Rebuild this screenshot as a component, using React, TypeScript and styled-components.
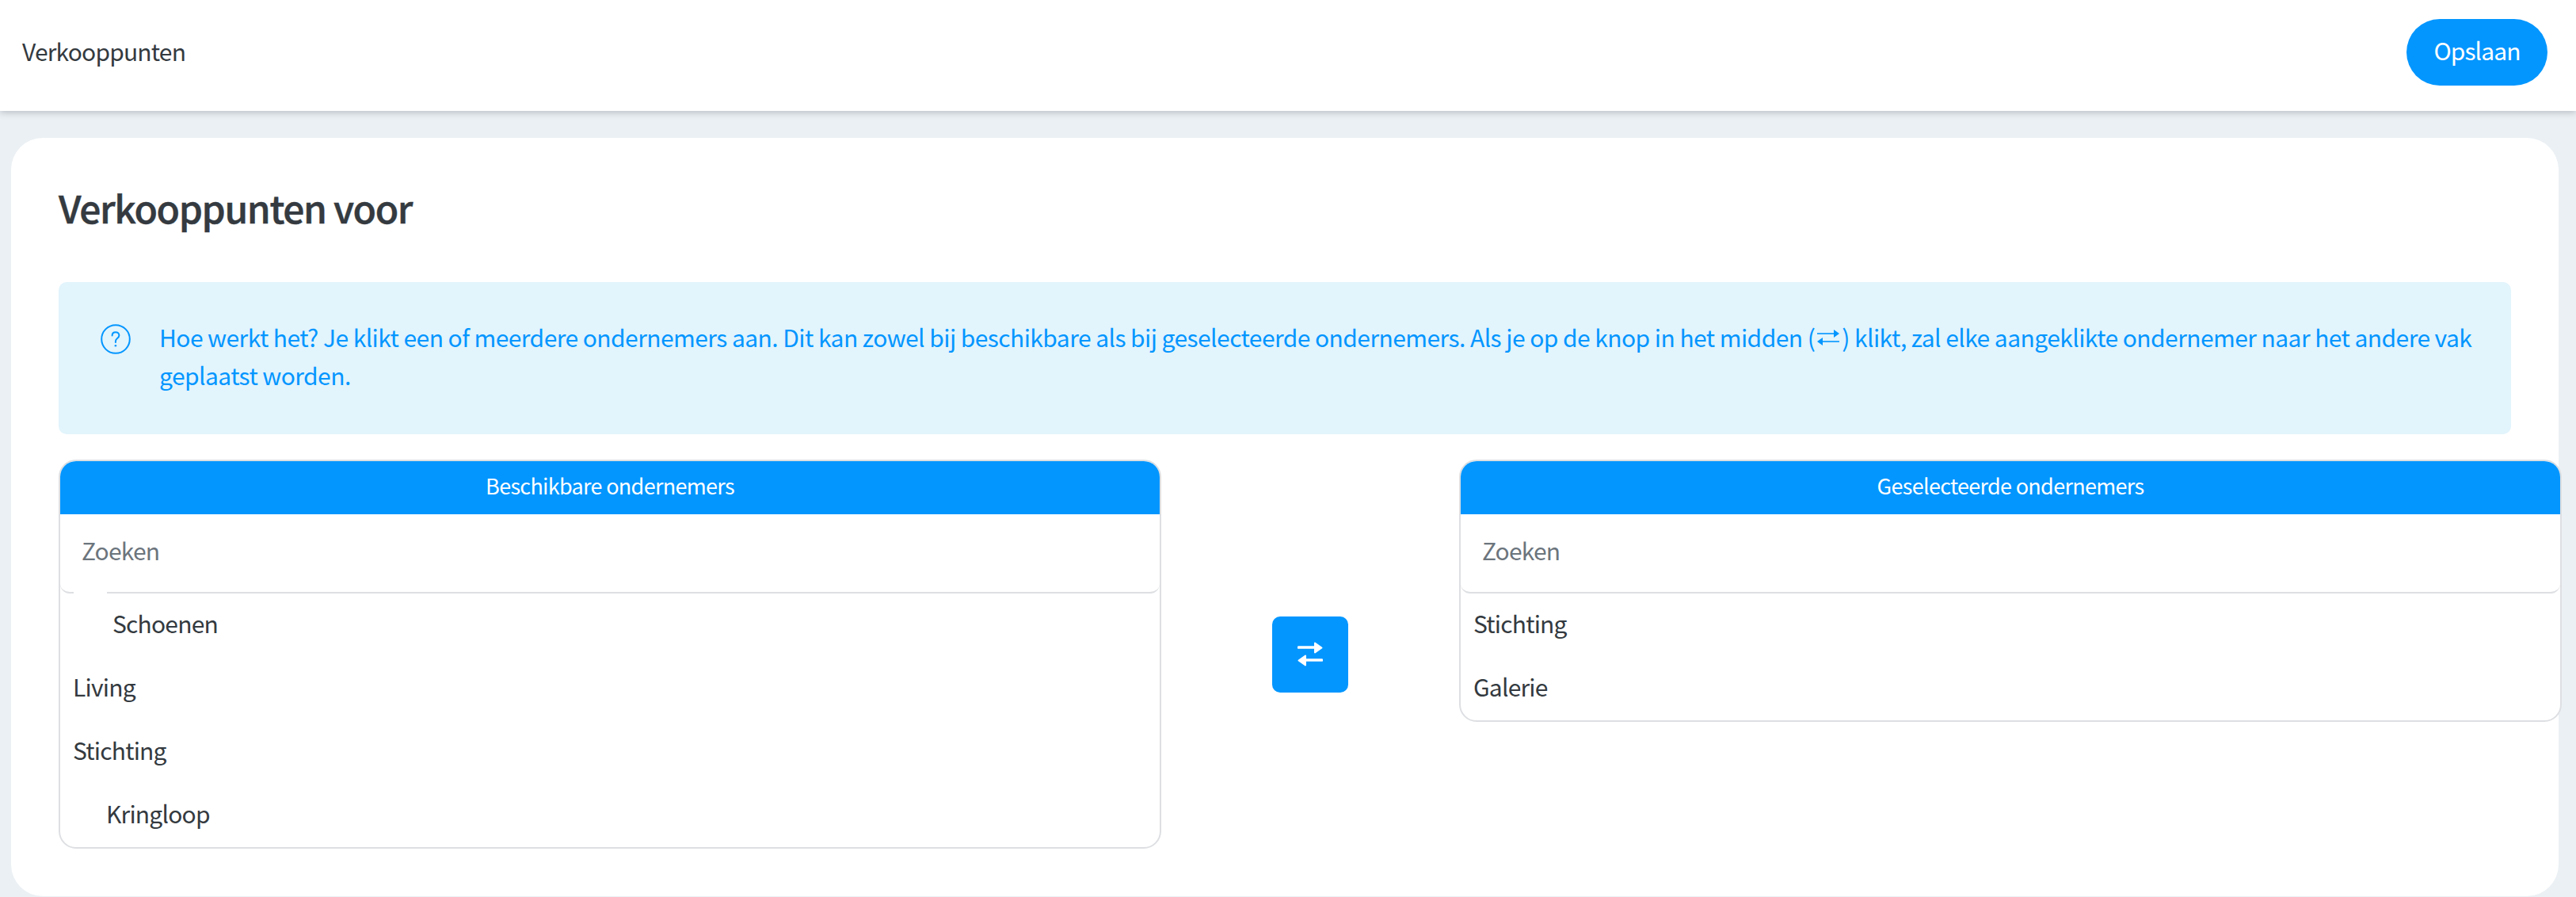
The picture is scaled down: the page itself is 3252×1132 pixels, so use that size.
import styled, { createGlobalStyle } from "styled-components";

const blue = "#0396ff";
const fontStack = '"Noto Sans CJK SC", "Open Sans", "Liberation Sans", sans-serif';

const GlobalStyle = createGlobalStyle`
  html, body {
    margin: 0;
    padding: 0;
    background: #ebf0f4;
    overflow: hidden;
  }
  * {
    box-sizing: border-box;
  }
`;

const Page = styled.div`
  width: 3252px;
  height: 1132px;
  font-family: ${fontStack};
  color: #343a40;
  overflow: hidden;
`;

const TopBar = styled.header`
  position: relative;
  display: flex;
  align-items: center;
  justify-content: space-between;
  height: 140px;
  padding: 0 36px 8px 28px;
  background: #fff;
  box-shadow: 0 2px 8px rgba(60, 70, 80, 0.3);
`;

const TopTitle = styled.div`
  margin-bottom: 5px;
  font-size: 30px;
  line-height: 44px;
  letter-spacing: -0.82px;
`;

const SaveButton = styled.button`
  width: 178px;
  height: 84px;
  padding: 0 0 6px;
  border: 0;
  border-radius: 42px;
  background: ${blue};
  color: #fff;
  font-family: inherit;
  font-size: 30px;
  letter-spacing: -0.9px;
`;

const Card = styled.main`
  height: 957px;
  margin: 34px 22px 0 14px;
  padding: 60px 60px 0;
  background: #fff;
  border-radius: 40px;
`;

const Heading = styled.h1`
  margin: 0 0 68px;
  font-size: 48px;
  line-height: 54px;
  font-weight: 500;
  letter-spacing: -1.37px;
  -webkit-text-stroke: 0.5px #343a40;
  color: #343a40;
`;

const Notice = styled.div`
  display: flex;
  align-items: flex-start;
  height: 192px;
  margin-bottom: 32px;
  padding: 45px 40px 0 53px;
  background: #e2f4fc;
  border-radius: 10px;
  color: ${blue};
  font-size: 30px;
  line-height: 48px;
  letter-spacing: -0.56px;
`;

const NoticeIcon = styled.svg`
  flex: none;
  width: 38px;
  height: 38px;
  margin: 8px 36px 0 0;
`;

const SwapInline = styled.svg`
  display: inline-block;
  width: 28px;
  height: 20px;
  margin: 0 3px;
  vertical-align: 2px;
`;

const Columns = styled.section`
  display: grid;
  grid-template-columns: 1392px 376px 1392px;
  align-items: start;
`;

const Panel = styled.div`
  position: relative;
  border: 2px solid #dddfe2;
  border-radius: 22px;
  overflow: hidden;
  background: #fff;
`;

const PanelHeader = styled.div`
  height: 67px;
  background: ${blue};
  color: #fff;
  font-size: 27px;
  line-height: 62px;
  letter-spacing: -0.7px;
  text-align: center;
`;

const SearchInput = styled.input`
  display: block;
  width: 100%;
  height: 100px;
  padding: 0 27px 8px;
  border: 0;
  border-bottom: 2px solid #dddfe2;
  border-radius: 0 0 12px 12px;
  outline: 0;
  font-family: inherit;
  font-size: 30px;
  letter-spacing: -0.8px;
  color: #343a40;

  &::placeholder {
    color: #6c757d;
    opacity: 1;
  }
`;

const Row = styled.div<{ $indent?: number }>`
  height: 80px;
  padding-left: ${(p) => 16 + (p.$indent ?? 0)}px;
  font-size: 30px;
  line-height: 74px;
  letter-spacing: -0.8px;
`;

const Patch = styled.span`
  position: absolute;
  top: 163px;
  left: 17px;
  width: 42px;
  height: 4px;
  background: #fff;
`;

const SwapCell = styled.div`
  display: flex;
  justify-content: center;
  padding-top: 198px;
`;

const SwapButton = styled.button`
  display: flex;
  align-items: center;
  justify-content: center;
  width: 96px;
  height: 96px;
  padding: 0;
  border: 0;
  border-radius: 10px;
  background: ${blue};
`;

const SwapIcon = styled.svg`
  width: 32px;
  height: 32px;
`;

function ListPanel({
  title,
  rows,
  patched,
}: {
  title: string;
  rows: { name: string; indent?: number }[];
  patched?: boolean;
}) {
  return (
    <Panel>
      <PanelHeader>{title}</PanelHeader>
      <SearchInput placeholder="Zoeken" readOnly />
      {patched && <Patch />}
      {rows.map((row) => (
        <Row key={row.name} $indent={row.indent}>
          {row.name}
        </Row>
      ))}
    </Panel>
  );
}

export default function App() {
  return (
    <Page>
      <GlobalStyle />
      <TopBar>
        <TopTitle>Verkooppunten</TopTitle>
        <SaveButton>Opslaan</SaveButton>
      </TopBar>
      <Card>
        <Heading>Verkooppunten voor</Heading>
        <Notice>
          <NoticeIcon viewBox="0 0 38 38" fill="none" stroke={blue} strokeWidth="2">
            <circle cx="19" cy="19" r="17.8" />
            <path d="M14.6 14.6c0-2.7 1.9-4.4 4.4-4.4s4.4 1.7 4.4 4.1c0 2-1.2 3-2.6 4-1.3 1-1.9 1.9-1.9 3.6v1.1" strokeLinecap="round" />
            <circle cx="18.9" cy="27.2" r="1.3" fill={blue} stroke="none" />
          </NoticeIcon>
          <div>
            Hoe werkt het? Je klikt een of meerdere ondernemers aan. Dit kan zowel bij beschikbare als bij geselecteerde ondernemers. Als je op de knop in het midden (
            <SwapInline viewBox="0 0 28 20" fill={blue} stroke={blue}>
              <path d="M0 5h22" strokeWidth="1.6" />
              <path d="M21 0l7 5-7 5z" stroke="none" />
              <path d="M28 15H6" strokeWidth="1.6" />
              <path d="M7 10l-7 5 7 5z" stroke="none" />
            </SwapInline>
            ) klikt, zal elke aangeklikte ondernemer naar het andere vak geplaatst worden.
          </div>
        </Notice>
        <Columns>
          <ListPanel
            title="Beschikbare ondernemers"
            patched
            rows={[
              { name: "Schoenen", indent: 50 },
              { name: "Living" },
              { name: "Stichting" },
              { name: "Kringloop", indent: 42 },
            ]}
          />
          <SwapCell>
            <SwapButton aria-label="Wisselen">
              <SwapIcon viewBox="0 0 32 32" fill="#fff" stroke="#fff" strokeLinejoin="round">
                <path d="M1.5 7h21" strokeWidth="3.6" strokeLinecap="round" />
                <path d="M22 1.5l8.5 6-8.5 6z" strokeWidth="2" />
                <path d="M30.5 23h-21" strokeWidth="3.6" strokeLinecap="round" />
                <path d="M10 17.5l-8.5 6 8.5 6z" strokeWidth="2" />
              </SwapIcon>
            </SwapButton>
          </SwapCell>
          <ListPanel
            title="Geselecteerde ondernemers"
            rows={[{ name: "Stichting" }, { name: "Galerie" }]}
          />
        </Columns>
      </Card>
    </Page>
  );
}
